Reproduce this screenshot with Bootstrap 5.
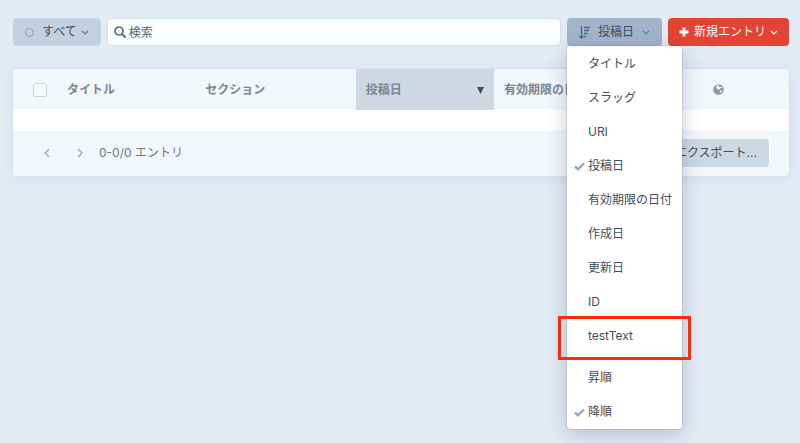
<!DOCTYPE html>
<html lang="ja">
<head>
<meta charset="utf-8">
<meta name="viewport" content="width=device-width, initial-scale=1">
<title>エントリ</title>
<link href="https://cdn.jsdelivr.net/npm/bootstrap@5.3.0/dist/css/bootstrap.min.css" rel="stylesheet">
<style>
body{background:#e3ebf5;color:#3f4d5a;font:12px/20px Inter,"Noto Sans CJK JP",sans-serif}
.page{padding:18px 11px 18px 13px}
.toolbar{gap:6px;margin-bottom:23px}
.btn{--bs-btn-font-size:12px;--bs-btn-line-height:20px;--bs-btn-padding-y:4px;--bs-btn-border-width:0;--bs-btn-border-radius:4px;white-space:nowrap;display:flex;align-items:center}
.btn-status{--bs-btn-bg:#c2d1e0;--bs-btn-color:#3f4d5a;--bs-btn-padding-x:12px}
.btn-sort,.btn-sort.show{--bs-btn-bg:#a2b4cc;--bs-btn-active-bg:#a2b4cc;--bs-btn-color:#3f4d5a;--bs-btn-active-color:#3f4d5a;--bs-btn-padding-x:12px}
.btn-new{--bs-btn-bg:#e34434;--bs-btn-color:#fff;--bs-btn-padding-x:11px}
.btn-export{--bs-btn-bg:#cdd8e4;--bs-btn-color:#3f4d5a;--bs-btn-padding-x:12px}
.status-ring{width:9px;height:9px;border:1px solid #8a9bb2;border-radius:50%;margin-right:8px}
.search-icon{left:7px;top:8px;color:#596f88}
.search-box{height:28px;font-size:12px;line-height:20px;padding:3px 8px 3px 21px;border:1px solid #d3dfea;border-radius:4px;background:#fbfcfe}
.search-box::placeholder{color:#596673;opacity:1}
.sort-menu{--bs-dropdown-min-width:115px;--bs-dropdown-font-size:12px;--bs-dropdown-padding-y:0;--bs-dropdown-border-width:0;--bs-dropdown-border-radius:4px;top:100%;left:0;padding-top:1px;color:#3f4d5a;box-shadow:0 0 0 1px #1f2f4018,0 5px 20px #1f2f4040}
.sort-menu .dropdown-item{--bs-dropdown-link-color:#3f4d5a;display:flex;align-items:center;height:34px;padding:0 10px 0 7px}
.sort-menu hr{margin:4px 0;border:0;height:0}
.tick{width:14px;flex:none;display:flex;color:#9daab8}
.callout-frame{inset:-3px -9px -7px -9px;border:3px solid #f92b0b;pointer-events:none;z-index:2}
.entries{border-radius:4px;background:#f3f7fc;box-shadow:0 0 0 1px #cddae866,0 2px 12px #c3d4e580;overflow:hidden}
.entries table{table-layout:fixed;margin:0}
.entries th{height:41px;padding:0 10px;background:#f3f7fc;color:#7b858f;font-weight:700;border:0;vertical-align:middle;white-space:nowrap}
.entries td{height:20px;padding:0;border:0;background:#fff}
.entries th.sorted{background:#cdd8e4}
.entries th.select-cell{width:44px;padding:0 0 0 20px}
.w-title,.entries th.sorted{width:17.8%}
.w-section{width:20.7%}
.w-expiry{width:27%}
.entries .form-check-input{display:block;width:14px;height:14px;margin:0;border:1px solid #c5d1df;border-radius:3px;background-color:#fbfcfe}
.entries-footer{height:46px;padding:0 20px;color:#6d7884;font-size:12px}
.pager{width:33px;height:28px;border:0;padding:0;background:none;color:#98a3b0;text-align:left}
.pager svg{display:block;margin-left:10px}
.sort-arrow{color:#3f4d5a;display:block}
</style>
<script src="https://cdn.jsdelivr.net/npm/bootstrap@5.3.0/dist/js/bootstrap.bundle.min.js"></script>
</head>
<body>
<main class="page min-vh-100">
  <div class="toolbar d-flex align-items-center">
    <button class="btn btn-status" type="button"><span class="status-ring"></span>すべて
      <svg class="ms-1" width="8" height="8" viewBox="0 0 8 8" fill="none" stroke="#66788c" stroke-width="1.2" aria-hidden="true"><path d="M1 3l3 3 3-3"/></svg>
    </button>
    <div class="position-relative flex-grow-1">
      <svg class="search-icon position-absolute" width="12" height="12" viewBox="0 0 12 12" fill="none" stroke="currentColor" stroke-width="1.7" aria-hidden="true"><circle cx="5" cy="5" r="4"/><path d="M8 8l3 3" stroke-width="2" stroke-linecap="round"/></svg>
      <input class="search-box form-control" type="search" placeholder="検索" aria-label="検索">
    </div>
    <div class="dropdown">
      <button class="btn btn-sort show" type="button" aria-expanded="true">
        <svg class="me-2" width="11" height="13" viewBox="0 0 11 13" fill="none" stroke="#526479" aria-hidden="true"><path d="M2.5 0v12M.5 10l2 2 2-2M5 1.5h6M5 4.5h5M5 7.5h3.5M5 10.5h2" stroke-width="1.3"/></svg>投稿日
        <svg class="ms-2" width="8" height="8" viewBox="0 0 8 8" fill="none" stroke="#66788c" stroke-width="1.2" aria-hidden="true"><path d="M1 3l3 3 3-3"/></svg>
      </button>
      <div class="sort-menu dropdown-menu show">
        <a class="dropdown-item" href="#"><span class="tick"></span>タイトル</a>
        <a class="dropdown-item" href="#"><span class="tick"></span>スラッグ</a>
        <a class="dropdown-item" href="#"><span class="tick"></span>URI</a>
        <a class="dropdown-item" href="#"><span class="tick"><svg width="11" height="9" viewBox="0 0 11 9" fill="none" stroke="currentColor" stroke-width="2.4" aria-hidden="true"><path d="M1 4.5L4 7.3 10 1.3"/></svg></span>投稿日</a>
        <a class="dropdown-item" href="#"><span class="tick"></span>有効期限の日付</a>
        <a class="dropdown-item" href="#"><span class="tick"></span>作成日</a>
        <a class="dropdown-item" href="#"><span class="tick"></span>更新日</a>
        <a class="dropdown-item" href="#"><span class="tick"></span>ID</a>
        <div class="position-relative">
          <a class="dropdown-item" href="#"><span class="tick"></span>testText</a>
          <span class="callout-frame position-absolute"></span>
        </div>
        <hr>
        <a class="dropdown-item" href="#"><span class="tick"></span>昇順</a>
        <a class="dropdown-item" href="#"><span class="tick"><svg width="11" height="9" viewBox="0 0 11 9" fill="none" stroke="currentColor" stroke-width="2.4" aria-hidden="true"><path d="M1 4.5L4 7.3 10 1.3"/></svg></span>降順</a>
      </div>
    </div>
    <button class="btn btn-new" type="button">
      <svg class="me-1" width="11" height="10" viewBox="0 0 11 10" stroke="#fff" stroke-width="2.8" aria-hidden="true"><path d="M5 .5v9M.5 5h9"/></svg>新規エントリ
      <svg class="ms-1" width="8" height="8" viewBox="0 0 8 8" fill="none" stroke="#fff" stroke-width="1.2" aria-hidden="true"><path d="M1 3l3 3 3-3"/></svg>
    </button>
  </div>
  <section class="entries">
    <table class="table">
      <thead>
        <tr>
          <th class="select-cell"><input class="form-check-input" type="checkbox" aria-label="すべて選択"></th>
          <th class="w-title" scope="col">タイトル</th>
          <th class="w-section" scope="col">セクション</th>
          <th class="sorted" scope="col" aria-sort="descending"><div class="d-flex justify-content-between align-items-center">投稿日<svg class="sort-arrow" width="7" height="8" viewBox="0 0 7 8" fill="currentColor" aria-hidden="true"><path d="M0 1h7L3.5 8z"/></svg></div></th>
          <th class="w-expiry" scope="col">有効期限の日付</th>
          <th scope="col" aria-label="リンク"><svg class="d-block" width="11" height="11" viewBox="0 0 11 11" aria-hidden="true"><circle cx="5.5" cy="5.5" r="5.3" fill="#8c98a5"/><path d="M3.6 1.5l1.9-.5.9 1-.7.9 1.4.3 1.2-.7.8 1.2-1.7.6-1.5 1.6-1.6-1-1-.9zM6.9 6.8l1.8-.6.3 1.2-1.4 1.5-1 .1z" fill="#f3f7fc"/></svg></th>
        </tr>
      </thead>
      <tbody><tr><td colspan="6"></td></tr></tbody>
    </table>
    <div class="entries-footer d-flex align-items-center">
      <button class="pager" type="button" aria-label="前のページ"><svg width="8" height="10" viewBox="0 0 8 10" fill="none" stroke="currentColor" stroke-width="1.2" aria-hidden="true"><path d="M6 1L2 5l4 4"/></svg></button>
      <button class="pager" type="button" aria-label="次のページ"><svg width="8" height="10" viewBox="0 0 8 10" fill="none" stroke="currentColor" stroke-width="1.2" aria-hidden="true"><path d="M2 1l4 4-4 4"/></svg></button>
      <span>0-0/0 エントリ</span>
      <button class="btn btn-export ms-auto" type="button">エクスポート...</button>
    </div>
  </section>
</main>
</body>
</html>
